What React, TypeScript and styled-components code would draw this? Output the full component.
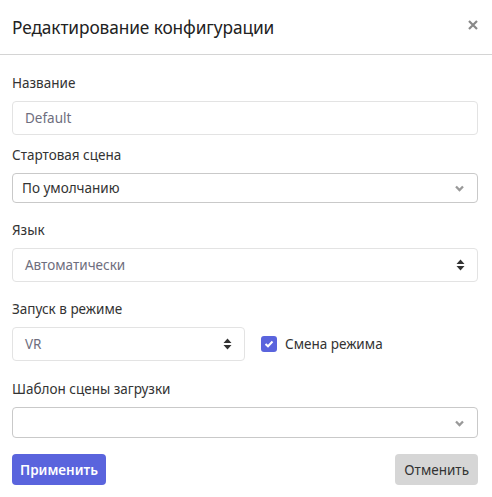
import styled, { createGlobalStyle } from 'styled-components';

const GlobalStyle = createGlobalStyle`
    html, body {
        margin: 0;
        padding: 0;
        background: #fff;
        font-family: "Noto Sans", "Open Sans", sans-serif;
        color: #333;
    }
    * { box-sizing: border-box; }
`

const Modal = styled.div`
    width: 492px;
    height: 497px;
    background: #fff;
`

const Header = styled.header`
    height: 55px;
    padding: 0 12px;
    display: flex;
    align-items: center;
    justify-content: space-between;
    border-bottom: 1px solid #d4d4d4;
`

const Title = styled.h2`
    margin: 0;
    font-size: 17.3px;
    font-weight: 400;
    color: #222;
    letter-spacing: -0.1px;
`

const Close = styled.button`
    border: none;
    background: none;
    padding: 0;
    width: 18px;
    height: 18px;
    display: flex;
    align-items: center;
    justify-content: center;
    cursor: pointer;
    margin-right: -2px;
    margin-top: -4px;
`

const Body = styled.div`
    padding: 18px 14px 0 12px;
    display: flex;
    flex-direction: column;
`

const Field = styled.div<{ $mb: number }>`
    display: flex;
    flex-direction: column;
    margin-bottom: ${p => p.$mb}px;
`

const Label = styled.label`
    font-size: 13.5px;
    line-height: 20px;
    color: #333;
    margin-bottom: 8px;
`

const Control = styled.div<{ $h: number; $dark?: boolean; $width?: string }>`
    position: relative;
    height: ${p => p.$h}px;
    width: ${p => p.$width ?? '100%'};
    border: 1px solid ${p => (p.$dark ? '#c9c9c9' : '#e3e3e3')};
    border-radius: 4px;
    display: flex;
    align-items: center;
    justify-content: space-between;
    padding: 0 12px 0 ${p => (p.$dark ? 9 : 12)}px;
    font-size: 13.5px;
    color: ${p => (p.$dark ? '#333' : '#6e6e7e')};
    background: #fff;
`

const Row = styled.div`
    display: flex;
    align-items: center;
    gap: 16px;
`

const Check = styled.label`
    display: flex;
    align-items: center;
    gap: 8px;
    font-size: 13.5px;
    color: #333;
`

const Box = styled.span`
    width: 16px;
    height: 16px;
    border-radius: 3px;
    background: #5a64dd;
    display: flex;
    align-items: center;
    justify-content: center;
`

const Footer = styled.div`
    display: flex;
    justify-content: space-between;
`

const Button = styled.button<{ $primary?: boolean }>`
    height: 31px;
    padding: 0 ${p => (p.$primary ? 8 : 9)}px;
    border: none;
    border-radius: 4px;
    font-family: inherit;
    font-size: 13.5px;
    font-weight: ${p => (p.$primary ? 600 : 400)};
    background: ${p => (p.$primary ? '#5a64dd' : '#d6d6d6')};
    color: ${p => (p.$primary ? '#fff' : '#333')};
    cursor: pointer;
`

const Chevron = () => (
    <svg width="11" height="8" viewBox="0 0 11 8">
        <path d="M2 2.5 L5.5 6 L9 2.5" fill="none" stroke="#999" strokeWidth="2.3" />
    </svg>
)

const UpDown = () => (
    <svg width="9" height="12" viewBox="0 0 9 12">
        <path d="M4.5 0.5 L8.5 5 H0.5 Z M4.5 11.5 L8.5 7 H0.5 Z" fill="#333" />
    </svg>
)

export default function App() {
    return (
        <Modal>
            <GlobalStyle />
            <Header>
                <Title>Редактирование конфигурации</Title>
                <Close aria-label="close">
                    <svg width="10" height="10" viewBox="0 0 10 10">
                        <path d="M1 1 L9 9 M9 1 L1 9" stroke="#888" strokeWidth="2.2" />
                    </svg>
                </Close>
            </Header>

            <Body>
                <Field $mb={10}>
                    <Label>Название</Label>
                    <Control $h={34}>Default</Control>
                </Field>

                <Field $mb={17}>
                    <Label>Стартовая сцена</Label>
                    <Control $h={30} $dark>
                        По умолчанию
                        <Chevron />
                    </Control>
                </Field>

                <Field $mb={17}>
                    <Label>Язык</Label>
                    <Control $h={34}>
                        Автоматически
                        <UpDown />
                    </Control>
                </Field>

                <Field $mb={18}>
                    <Label>Запуск в режиме</Label>
                    <Row>
                        <Control $h={34} $width="233px">
                            VR
                            <UpDown />
                        </Control>
                        <Check>
                            <Box>
                                <svg width="10" height="8" viewBox="0 0 10 8">
                                    <path d="M1.5 4 L4 6.3 L8.5 1.5" fill="none" stroke="#fff" strokeWidth="2" />
                                </svg>
                            </Box>
                            Смена режима
                        </Check>
                    </Row>
                </Field>

                <Field $mb={16}>
                    <Label>Шаблон сцены загрузки</Label>
                    <Control $h={31} $dark>
                        <span />
                        <Chevron />
                    </Control>
                </Field>

                <Footer>
                    <Button $primary>Применить</Button>
                    <Button>Отменить</Button>
                </Footer>
            </Body>
        </Modal>
    );
}
